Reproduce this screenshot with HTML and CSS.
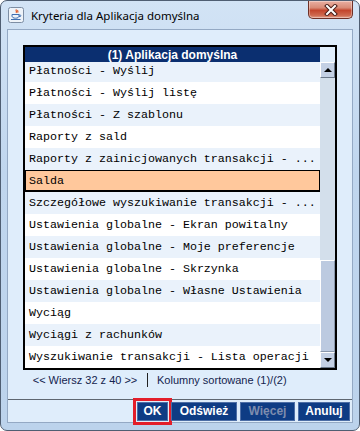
FILE: index.html
```html
<!DOCTYPE html>
<html lang="pl">
<head>
    <meta charset="UTF-8">
    <meta name="viewport" content="width=device-width, initial-scale=1.0">
    <title>Kryteria dla Aplikacja domyślna</title>
    <link rel="stylesheet" href="styles.css">
</head>
<body>

    <div class="okno">
        <!-- Pasek tytułu -->
        <div class="pasek-tytulu">
            <svg class="ikona" width="16" height="16" viewBox="0 0 16 16">
                <rect x="0.5" y="0.5" width="15" height="15" rx="2" fill="#eef3f9" stroke="#7d8ea4"/>
                <path d="M8.5 2.5c-1.5 1.2 1 2-0.5 3.4M10 3.2c-1 0.8 0.6 1.4-0.4 2.4" fill="none" stroke="#e0531d" stroke-width="1.2"/>
                <path d="M4 7.5h7v1.5c0 1.4-1.4 2.2-3.5 2.2S4 10.4 4 9z" fill="none" stroke="#3f6fb0" stroke-width="1"/>
                <path d="M11 8h1.2c0.9 0 0.9 1.6-0.2 1.6h-1" fill="none" stroke="#3f6fb0" stroke-width="1"/>
                <path d="M3 12.5h9.5" stroke="#3f6fb0" stroke-width="1"/>
            </svg>
            <span class="tytul">Kryteria dla Aplikacja domyślna</span>
            <div class="zamknij">
                <svg width="14" height="12" viewBox="0 0 14 12">
                    <path d="M3 2l8 8M11 2l-8 8" stroke="#4a1d17" stroke-width="4" stroke-linecap="square"/>
                    <path d="M3 2l8 8M11 2l-8 8" stroke="#ffffff" stroke-width="2" stroke-linecap="square"/>
                </svg>
            </div>
        </div>

        <!-- Obszar okna -->
        <div class="obszar">
            <div class="panel">
                <div class="tabela">
                    <div class="lista">
                        <div class="naglowek">(1) Aplikacja domyślna</div>
                        <div class="wiersze">
                            <div class="wiersz">Płatności - Wyślij</div>
                            <div class="wiersz">Płatności - Wyślij listę</div>
                            <div class="wiersz">Płatności - Z szablonu</div>
                            <div class="wiersz">Raporty z sald</div>
                            <div class="wiersz">Raporty z zainicjowanych transakcji - ...</div>
                            <div class="wiersz wybrany">Salda</div>
                            <div class="wiersz">Szczegółowe wyszukiwanie transakcji - ...</div>
                            <div class="wiersz">Ustawienia globalne - Ekran powitalny</div>
                            <div class="wiersz">Ustawienia globalne - Moje preferencje</div>
                            <div class="wiersz">Ustawienia globalne - Skrzynka</div>
                            <div class="wiersz">Ustawienia globalne - Własne Ustawienia</div>
                            <div class="wiersz">Wyciąg</div>
                            <div class="wiersz">Wyciągi z rachunków</div>
                            <div class="wiersz">Wyszukiwanie transakcji - Lista operacji</div>
                        </div>
                    </div>

                    <!-- Pasek przewijania -->
                    <div class="przewijanie">
                        <div class="rog"></div>
                        <div class="strzalka"><span class="trojkat-gora"></span></div>
                        <div class="tor"><div class="suwak"></div></div>
                        <div class="strzalka"><span class="trojkat-dol"></span></div>
                    </div>
                </div>

                <div class="status">
                    <span class="status-wiersz">&lt;&lt; Wiersz 32 z 40 &gt;&gt;</span>
                    <span class="status-sort">Kolumny sortowane (1)/(2)</span>
                </div>
            </div>

            <!-- Przyciski -->
            <div class="przyciski">
                <button class="przycisk ok">OK</button>
                <button class="przycisk odswiez">Odśwież</button>
                <button class="przycisk wiecej" disabled>Więcej</button>
                <button class="przycisk anuluj">Anuluj</button>
            </div>
        </div>
    </div>

</body>
</html>
```

FILE: styles.css
```css
/* --- Okno dialogowe w stylu Windows 7 --- */
:root {
    --ramka: #c3d8ef;
    --tlo: #dfedfb;
    --granat: #0b2f70;
    --przycisk: #0e3c84;
    --wiersz-jasny: #eaf2fb;
    --wybrany: #ffc89c;
    --tor: #d3dfeb;
    --przewijak: #c3d0e4;
}

body {
    margin: 0;
    width: 360px;
    height: 431px;
    background: #ffffff;
    font-family: "Liberation Sans", Arial, sans-serif;
}

.okno {
    height: 431px;
    box-sizing: border-box;
    border: 1px solid #4f5e72;
    border-radius: 7px;
    background: linear-gradient(180deg, #d2e3f5 0%, #c0d6ee 40%, #bcd3ec 100%);
    padding: 0 6px 7px 6px;
    display: flex;
    flex-direction: column;
}

/* Pasek tytułu */
.pasek-tytulu {
    height: 28px;
    display: flex;
    align-items: flex-start;
}

.ikona {
    margin: 6px 0 0 1px;
    flex: none;
}

.tytul {
    margin: 7px 0 0 7px;
    font-family: "Noto Sans", sans-serif;
    font-size: 11.5px;
    line-height: 16px;
    color: #000;
    flex: 1;
}

.zamknij {
    width: 45px;
    height: 18px;
    box-sizing: border-box;
    border: 1px solid #6e3027;
    border-top: none;
    border-radius: 0 0 5px 5px;
    background: linear-gradient(180deg, #eab0a2 0%, #d88a76 40%, #c3452c 55%, #cf6a50 85%, #e2a08c 100%);
    box-shadow: inset 0 0 0 1px rgba(255, 255, 255, 0.35);
    display: flex;
    justify-content: center;
    align-items: center;
}

/* Obszar roboczy */
.obszar {
    flex: 1;
    border: 1px solid #94a9c4;
    background: var(--tlo);
    display: flex;
    flex-direction: column;
}

.panel {
    height: 370px;
    box-sizing: border-box;
    padding: 15px 15px 0 15px;
    border-bottom: 1px solid #5e6670;
}

.tabela {
    width: 314px;
    height: 325px;
    box-sizing: border-box;
    border: 2px solid #000;
    display: flex;
}

.lista {
    width: 295px;
    display: flex;
    flex-direction: column;
}

.naglowek {
    height: 15px;
    background: var(--granat);
    color: #fff;
    font-weight: bold;
    font-size: 12px;
    line-height: 16px;
    text-align: center;
}

.wiersze {
    height: 306px;
    overflow: hidden;
    display: flex;
    flex-direction: column;
    justify-content: flex-end;
}

.wiersz {
    flex: none;
    height: 22px;
    line-height: 22px;
    padding-left: 4px;
    font-family: "Liberation Mono", "Courier New", monospace;
    font-size: 11.67px;
    color: #000;
    background: #fff;
    white-space: nowrap;
}

.wiersz:nth-child(odd) {
    background: var(--wiersz-jasny);
}

.wiersz.wybrany {
    background: var(--wybrany);
    box-shadow: inset 0 0 0 1px #000, inset 0 -1px 0 1px #000;
}

/* Pasek przewijania */
.przewijanie {
    width: 15px;
    display: flex;
    flex-direction: column;
}

.rog {
    height: 15px;
    background: var(--tlo);
}

.strzalka {
    height: 16px;
    box-sizing: border-box;
    background: var(--przewijak);
    border: 1px solid;
    border-color: #ffffff #6a7889 #6a7889 #ffffff;
    display: flex;
    justify-content: center;
    align-items: center;
}

.trojkat-gora {
    border-left: 4px solid transparent;
    border-right: 4px solid transparent;
    border-bottom: 4px solid #000;
}

.trojkat-dol {
    border-left: 4px solid transparent;
    border-right: 4px solid transparent;
    border-top: 4px solid #000;
}

.tor {
    flex: 1;
    background: var(--tor);
    display: flex;
    flex-direction: column;
    justify-content: flex-end;
}

.suwak {
    height: 92px;
    box-sizing: border-box;
    background: #bccae0;
    border: 1px solid;
    border-color: #ffffff #8a98ac #8a98ac #ffffff;
}

/* Pasek statusu */
.status {
    height: 20px;
    display: flex;
    align-items: center;
    font-size: 11px;
    color: #14244e;
}

.status-wiersz {
    width: 124px;
    text-align: center;
    border-right: 1px solid #222;
    line-height: 14px;
}

.status-sort {
    padding-left: 9px;
}

/* Przyciski */
.przyciski {
    flex: 1;
    display: flex;
    justify-content: flex-end;
    align-items: center;
    gap: 3px;
    padding-right: 2px;
}

.przycisk {
    height: 19px;
    padding: 0;
    border: 1px solid #4d6ea6;
    background: var(--przycisk);
    color: #fff;
    font-family: "Liberation Sans", Arial, sans-serif;
    font-weight: bold;
    font-size: 12px;
}

.ok {
    width: 31px;
    outline: 3px solid #e31e2a;
    outline-offset: 1px;
}

.odswiez {
    width: 66px;
}

.wiecej {
    width: 55px;
    color: #7d8cae;
}

.anuluj {
    width: 52px;
}
```
